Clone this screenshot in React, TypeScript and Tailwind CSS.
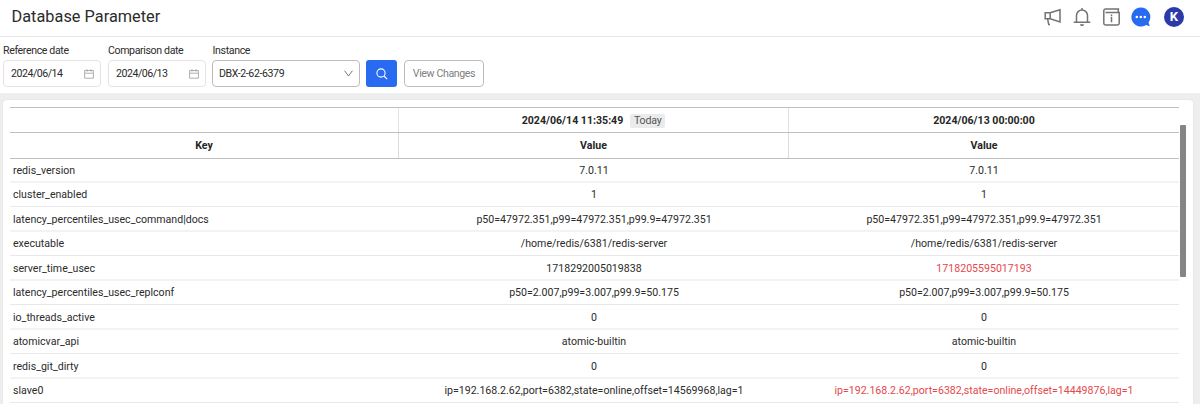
import React from "react";

type Row = { name: string; ref: string; cmp: string; changed?: boolean };

const rows: Row[] = [
  { name: "redis_version", ref: "7.0.11", cmp: "7.0.11" },
  { name: "cluster_enabled", ref: "1", cmp: "1" },
  {
    name: "latency_percentiles_usec_command|docs",
    ref: "p50=47972.351,p99=47972.351,p99.9=47972.351",
    cmp: "p50=47972.351,p99=47972.351,p99.9=47972.351",
  },
  { name: "executable", ref: "/home/redis/6381/redis-server", cmp: "/home/redis/6381/redis-server" },
  { name: "server_time_usec", ref: "1718292005019838", cmp: "1718205595017193", changed: true },
  {
    name: "latency_percentiles_usec_replconf",
    ref: "p50=2.007,p99=3.007,p99.9=50.175",
    cmp: "p50=2.007,p99=3.007,p99.9=50.175",
  },
  { name: "io_threads_active", ref: "0", cmp: "0" },
  { name: "atomicvar_api", ref: "atomic-builtin", cmp: "atomic-builtin" },
  { name: "redis_git_dirty", ref: "0", cmp: "0" },
  {
    name: "slave0",
    ref: "ip=192.168.2.62,port=6382,state=online,offset=14569968,lag=1",
    cmp: "ip=192.168.2.62,port=6382,state=online,offset=14449876,lag=1",
    changed: true,
  },
];

function rowSize(i: number) {
  if (i === 0) return "h-6 border-b-2 border-[#f3f3f3] pt-px";
  return i % 2 === 0 ? "h-[25px] border-b-2 border-[#f3f3f3] pt-[2px]" : "h-6 border-b border-[#e8e8e8]";
}

function Calendar() {
  return (
    <svg width="10" height="10" viewBox="0 0 10 10" fill="none" stroke="#a6a6a6" strokeWidth="0.9">
      <path d="M0.6 1.5H9.4V9.2H0.6ZM0.6 4.2H9.4M3 0.2V2.7M7 0.2V2.7" />
    </svg>
  );
}

function DateField({ label, value }: { label: string; value: string }) {
  return (
    <div className="w-[98px]">
      <div className="h-[15px] pt-px text-[10.6px] leading-[15px] tracking-[-0.37px] whitespace-nowrap">{label}</div>
      <div className="mt-[3px] flex h-[27px] items-center justify-between rounded-[4px] border border-[#e4e4e4] pr-[6px] pl-[7px] text-[10.6px] tracking-[-0.48px]">
        <span>{value}</span>
        <Calendar />
      </div>
    </div>
  );
}

export default function App() {
  return (
    <div className="flex h-[404px] w-[1200px] flex-col overflow-hidden bg-[#eeeeee] font-['Roboto',sans-serif] text-[#2b2b2b]">
      <header className="flex h-[37px] shrink-0 items-center justify-between border-b border-[#e8e8e8] bg-white pr-4 pb-[2px] pl-[11.5px]">
        <h1 className="text-[16.3px] leading-5 tracking-[0.03px]">Database Parameter</h1>
        <div className="flex items-center">
          <svg width="18" height="18" viewBox="0 0 18 18" fill="none" stroke="#737373" strokeWidth="1.5">
            <path d="M1.2 4.8H6.2L16 1.7V14L6.2 10.8H1.2ZM6.2 4.8V10.8M3.6 10.8L4.7 16.4H6" />
          </svg>
          <svg className="ml-[11px]" width="18" height="20" viewBox="0 0 18 20" fill="none" stroke="#737373" strokeWidth="1.5">
            <path d="M0.7 15.3H17.3M3.5 15V8.5A5.5 5.5 0 0 1 14.5 8.5V15M9 3V1" />
            <path d="M6.8 17.2H11.2Q10.6 19.2 9 19.2T6.8 17.2Z" fill="#737373" stroke="none" />
          </svg>
          <svg className="ml-3" width="17" height="18" viewBox="0 0 17 18" fill="none" stroke="#737373" strokeWidth="1.5">
            <path d="M16.2 1H2.6A1.8 1.8 0 0 0 0.8 2.8V15.3Q0.8 17 2.5 17H14.5Q16.2 17 16.2 15.3V4.6H2.5M15.3 1V4.6M8.5 8.8V14.2M8.5 6.5V7.9" />
          </svg>
          <svg className="ml-[11px]" width="20" height="20" viewBox="0 0 20 20">
            <path d="M9.7 0.5A9.5 9.5 0 1 0 15 18L18.8 19.3L17.5 15.5A9.5 9.5 0 0 0 9.7 0.5Z" fill="#286af0" />
            <g fill="#fff"><circle cx="5.8" cy="10" r="1.3" /><circle cx="9.8" cy="10" r="1.3" /><circle cx="13.8" cy="10" r="1.3" /></g>
          </svg>
          <div className="ml-[13px] flex size-5 items-center justify-center rounded-full bg-[#2b3aa8] text-[13px] font-bold text-white">K</div>
        </div>
      </header>

      <section className="flex h-14 shrink-0 bg-white pt-[5px] pl-[3px]">
        <DateField label="Reference date" value="2024/06/14" />
        <div className="ml-[7px]"><DateField label="Comparison date" value="2024/06/13" /></div>
        <div className="ml-[6px] w-[148px]">
          <div className="h-[15px] pt-px pl-[0.5px] text-[10.6px] leading-[15px] tracking-[-0.35px]">Instance</div>
          <div className="mt-[3px] flex h-[27px] items-center justify-between rounded-[4px] border border-[#bdbdbd] pr-[6px] pl-[6px] text-[10.6px] tracking-[-0.4px]">
            <span className="pt-px">DBX-2-62-6379</span>
            <svg width="9" height="7" viewBox="0 0 9 7" fill="none" stroke="#777777"><path d="M0.6 0.7L4.5 6L8.4 0.7" /></svg>
          </div>
        </div>
        <button className="mt-[18px] ml-[6px] flex h-[27px] w-[31px] items-center justify-center rounded-[3px] bg-[#286af0]">
          <svg width="12" height="12" viewBox="0 0 12 12" fill="none" stroke="#fff" strokeWidth="1.1"><circle cx="5" cy="5" r="4.1" /><path d="M8 8L11.2 11.2" /></svg>
        </button>
        <button className="mt-[18px] ml-[7px] h-[27px] w-[80px] rounded-[4px] border border-[#bdbdbd] text-[10.6px] tracking-[-0.38px] whitespace-nowrap text-[#808080]">View Changes</button>
      </section>

      <main className="mt-[7px] ml-[3px] flex h-[304px] w-[1190px] shrink-0 rounded-t-[4px] bg-white pt-[7px] pl-[7px] shadow-[0_0_2px_rgba(0,0,0,0.08)]">
        <div className="w-[1169px] text-[10.6px]">
          <div className="grid h-[26px] grid-cols-[389px_390px_390px] border-y border-[#bfbfbf] font-bold text-[#262626]">
            <div className="border-r border-[#e2e2e2]" />
            <div className="flex items-center justify-center border-r border-[#e2e2e2] pt-px">
              <span>2024/06/14 11:35:49</span>
              <span className="ml-[7px] flex h-[14px] w-[35px] items-center justify-center rounded-[2px] bg-[#ebebeb] text-[10.6px] tracking-[-0.2px] font-normal text-[#555555]">Today</span>
            </div>
            <div className="flex items-center justify-center pt-px">2024/06/13 00:00:00</div>
          </div>
          <div className="grid h-[26px] grid-cols-[389px_390px_390px] border-b border-[#bfbfbf] font-bold text-[#262626]">
            <div className="flex items-center justify-center border-r border-[#dcdcdc]">Key</div>
            <div className="flex items-center justify-center border-r border-[#dcdcdc]">Value</div>
            <div className="flex items-center justify-center">Value</div>
          </div>
          {rows.map((r, i) => (
            <div key={r.name} className={`grid grid-cols-[389px_390px_390px] items-center whitespace-nowrap ${rowSize(i)}`}>
              <div className="pl-[3px]">{r.name}</div>
              <div className="text-center">{r.ref}</div>
              <div className={r.changed ? "text-center text-[#e5484d]" : "text-center"}>{r.cmp}</div>
            </div>
          ))}
        </div>
        <div className="mt-[18px] ml-[1px] h-[152px] w-[6px] rounded-[1px] bg-[#858585]" />
      </main>
    </div>
  );
}
